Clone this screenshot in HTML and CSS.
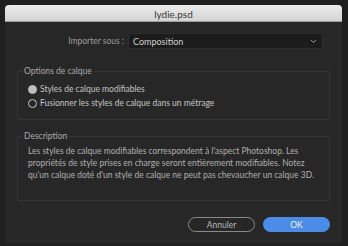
FILE: index.html
```html
<!DOCTYPE html>
<html lang="fr">
<head>
    <meta charset="UTF-8">
    <title>lydie.psd</title>
    <link rel="stylesheet" href="styles.css">
</head>
<body>
    <div class="backdrop">
        <div class="dialog">
            <div class="titlebar">lydie.psd</div>
            <div class="content">
                <div class="import-row">
                    <label class="import-label">Importer sous :</label>
                    <div class="select">
                        <span>Composition</span>
                        <svg class="chevron" width="7" height="5" viewBox="0 0 7 5">
                            <path d="M1 1 L3.5 3.5 L6 1" fill="none" stroke="#9a9a9a" stroke-width="1"/>
                        </svg>
                    </div>
                </div>

                <fieldset class="group options">
                    <legend>Options de calque</legend>
                    <div class="radio-row">
                        <span class="radio checked"></span>
                        <span>Styles de calque modifiables</span>
                    </div>
                    <div class="radio-row">
                        <span class="radio"></span>
                        <span>Fusionner les styles de calque dans un métrage</span>
                    </div>
                </fieldset>

                <fieldset class="group description">
                    <legend>Description</legend>
                    <p>Les styles de calque modifiables correspondent à l'aspect Photoshop. Les propriétés de style prises en charge seront entièrement modifiables. Notez qu'un calque doté d'un style de calque ne peut pas chevaucher un calque 3D.</p>
                </fieldset>

                <div class="buttons">
                    <button class="btn cancel">Annuler</button>
                    <button class="btn ok">OK</button>
                </div>
            </div>
        </div>
    </div>
</body>
</html>
```

FILE: styles.css
```css
html, body {
    margin: 0;
    height: 100%;
}

body {
    background-color: #1f1f1f;
    font-family: Lato, "Liberation Sans", sans-serif;
    font-size: 8.5px;
    color: #a9a9a9;
}

.backdrop {
    padding: 5px 6px 3px 5px;
}

.dialog {
    height: 238px;
    background-color: #272727;
    border-radius: 4px;
    display: flex;
    flex-direction: column;
    overflow: hidden;
}

.titlebar {
    height: 17px;
    line-height: 18px;
    text-align: center;
    font-size: 10px;
    color: #3a3a3a;
    background: linear-gradient(#ececec, #d4d4d4);
    border-bottom: 1px solid #9c9c9c;
    box-sizing: border-box;
}

.content {
    flex: 1;
    padding: 11px 12px 0 12px;
    display: flex;
    flex-direction: column;
}

.import-row {
    display: flex;
    align-items: center;
    padding-left: 43px;
    gap: 4px;
}

.import-label {
    width: 64px;
    text-align: right;
    color: #9d9d9d;
}

.select {
    flex: 1;
    margin-right: 7px;
    height: 14px;
    background-color: #1c1c1c;
    border: 1px solid #2e2e2e;
    border-radius: 2px;
    display: flex;
    align-items: center;
    justify-content: space-between;
    padding: 0 5px 0 4px;
    color: #d0d0d0;
    font-size: 9px;
}

.group {
    margin: 0;
    border: 1px solid #363636;
    border-radius: 2px;
    padding: 0 10px;
}

.group legend {
    padding: 0 2px 0 1px;
    margin-left: -5px;
    color: #a9a9a9;
}

.options {
    margin-top: 17px;
    height: 54px;
    box-sizing: border-box;
    padding-top: 6px;
}

.radio-row {
    display: flex;
    align-items: center;
    gap: 3px;
    height: 14px;
    color: #c4c4c4;
}

.radio {
    width: 9px;
    height: 9px;
    border-radius: 50%;
    border: 1px solid #c8c8c8;
    box-sizing: border-box;
    margin-top: 1px;
}

.radio.checked {
    background-color: #bdbdbd;
    border-color: #bdbdbd;
}

.description {
    margin-top: 11px;
    height: 70px;
    box-sizing: border-box;
}

.description p {
    margin: 4px 0 0 0;
    line-height: 12px;
    color: #afafaf;
}

.buttons {
    display: flex;
    justify-content: flex-end;
    gap: 8px;
    margin-top: 16px;
}

.btn {
    width: 67px;
    height: 15px;
    border-radius: 8px;
    font-family: inherit;
    font-size: 8.5px;
    padding: 0;
}

.cancel {
    background: transparent;
    border: 1px solid #8a8a8a;
    color: #b8b8b8;
}

.ok {
    background-color: #4b8ce6;
    border: none;
    color: #f0f0f0;
}
```
